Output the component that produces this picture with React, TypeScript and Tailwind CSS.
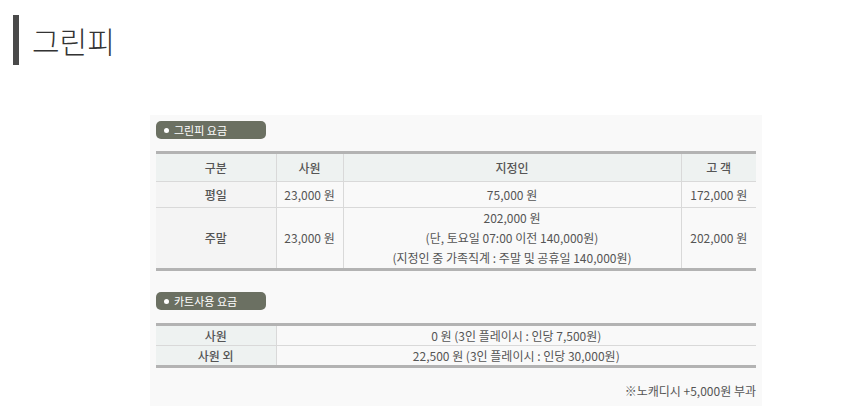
const font = { fontFamily: '"Noto Sans CJK KR", "Noto Sans", sans-serif' };

function Pill({ label }: { label: string }) {
  return (
    <div className="flex h-[18px] w-[110px] items-center gap-[5px] rounded-[5px] bg-[#6b7062] pl-[8px] text-[11px] leading-none text-white">
      <span className="h-[5px] w-[5px] rounded-full bg-white" />
      <span>{label}</span>
    </div>
  );
}

const td = "border-l border-[#d9d9d9] text-center first:border-l-0";

export default function App() {
  return (
    <div className="min-h-[420px] bg-white text-[#555]" style={font}>
      {/* page title */}
      <div className="flex items-center pt-[15px] pl-[13px]">
        <div className="h-[50px] w-[6px] bg-[#4a4a4a]" />
        <h1 className="pl-[13px] text-[30px] font-light leading-none text-[#333]">그린피</h1>
      </div>

      {/* fee panel */}
      <div className="ml-[150px] mt-[50px] w-[612px] bg-[#f9f9f9] px-[6px] pt-[6px] pb-[6px]">
        <Pill label="그린피 요금" />

        <table className="mt-[12px] w-full border-collapse border-y-[3px] border-[#b3b3b3] text-[12px]">
          <colgroup>
            <col className="w-[120px]" />
            <col className="w-[67px]" />
            <col />
            <col className="w-[75px]" />
          </colgroup>
          <thead>
            <tr className="h-[29px] bg-[#eef2f1]">
              <th className={`${td} font-medium`}>구분</th>
              <th className={`${td} font-medium`}>사원</th>
              <th className={`${td} font-medium`}>지정인</th>
              <th className={`${td} font-medium`}>고 객</th>
            </tr>
          </thead>
          <tbody>
            <tr className="h-[26px] border-t border-[#d9d9d9]">
              <td className={`${td} bg-[#f4f4f4] font-medium`}>평일</td>
              <td className={td}>23,000 원</td>
              <td className={td}>75,000 원</td>
              <td className={td}>172,000 원</td>
            </tr>
            <tr className="h-[61px] border-t border-[#d9d9d9]">
              <td className={`${td} bg-[#f4f4f4] font-medium`}>주말</td>
              <td className={td}>23,000 원</td>
              <td className={`${td} leading-[20px]`}>
                202,000 원<br />
                (단, 토요일 07:00 이전 140,000원)<br />
                (지정인 중 가족직계 : 주말 및 공휴일 140,000원)
              </td>
              <td className={td}>202,000 원</td>
            </tr>
          </tbody>
        </table>

        <div className="mt-[21px]">
          <Pill label="카트사용 요금" />
        </div>

        <table className="mt-[13px] w-full border-collapse border-y-[3px] border-[#b3b3b3] text-[12px]">
          <colgroup>
            <col className="w-[120px]" />
            <col />
          </colgroup>
          <tbody>
            <tr className="h-[21px]">
              <td className={`${td} bg-[#eef2f1] font-medium`}>사원</td>
              <td className={td}>0 원 (3인 플레이시 : 인당 7,500원)</td>
            </tr>
            <tr className="h-[21px] border-t border-[#d9d9d9]">
              <td className={`${td} bg-[#eef2f1] font-medium`}>사원 외</td>
              <td className={td}>22,500 원 (3인 플레이시 : 인당 30,000원)</td>
            </tr>
          </tbody>
        </table>

        <p className="mt-[14px] text-right text-[12px]">※노캐디시 +5,000원 부과</p>
      </div>
    </div>
  );
}
